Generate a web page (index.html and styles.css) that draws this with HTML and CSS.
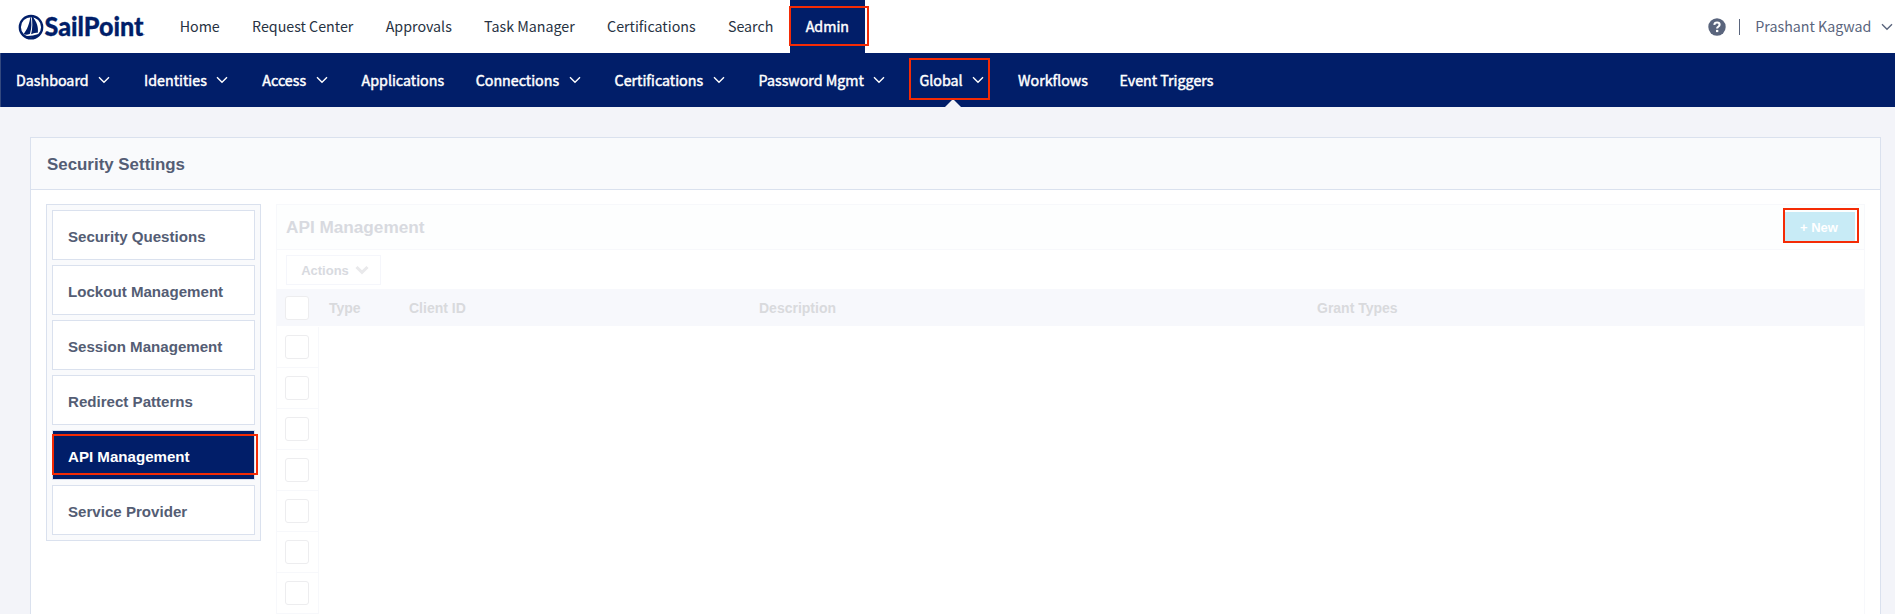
FILE: index.html
```
<!DOCTYPE html>
<html lang="en">
<head>
<meta charset="utf-8">
<title>Security Settings</title>
<link rel="stylesheet" href="styles.css">
</head>
<body>
<header class="topbar">
  <svg class="logo" width="130" height="30" viewBox="0 0 130 30">
    <circle cx="13" cy="15.2" r="11.2" fill="none" stroke="#011e69" stroke-width="2.3"/>
    <path d="M12.4 3.2C12 11 9 18 5.4 22.2Q8.500 23.300 12 21.800Q14.600 13 12.400 3.200Z" fill="#011e69"/>
    <path d="M13.400 3.200C19.500 10 20.500 16 19.800 20.800Q16.500 20.200 13.100 22.200Q15.400 13 13.400 3.200Z" fill="#011e69"/>
    <path d="M5.600 23.600Q12 24.800 20.600 22.100L18 25L9 25.500Z" fill="#011e69"/>
    <text class="logo-text" x="26.500" y="24.200" textLength="99" lengthAdjust="spacingAndGlyphs">SailPoint</text>
    <circle cx="126" cy="22.500" r=".6" fill="#8490b8"/>
  </svg>
  <nav class="primary">
    <a>Home</a><a>Request Center</a><a>Approvals</a><a>Task Manager</a><a>Certifications</a><a>Search</a><a class="current">Admin<i class="mark mark-admin"></i></a>
  </nav>
  <div class="account">
    <svg width="18" height="18" viewBox="0 0 18 18"><circle cx="9" cy="9" r="8.700" fill="#5a657d"/><path d="M6.300 6.900Q6.500 4.500 9.100 4.500Q11.600 4.500 11.600 6.700Q11.600 7.900 10.300 8.600Q9.100 9.200 9.100 10.500" fill="none" stroke="#fff" stroke-width="2.100"/><rect x="8" y="11.900" width="2.300" height="2.200" fill="#fff"/></svg>
    <span class="divider"></span>
    <span class="user">Prashant Kagwad</span>
    <svg class="chev" width="12" height="8" viewBox="0 0 12 8"><path d="M1 1.200L6 6.200L11 1.200"/></svg>
  </div>
</header>
<nav class="secondary">
  <a>Dashboard<svg class="chev" width="12" height="8" viewBox="0 0 12 8"><path d="M1 1.200L6 6.200L11 1.200"/></svg></a>
  <a>Identities<svg class="chev" width="12" height="8" viewBox="0 0 12 8"><path d="M1 1.200L6 6.200L11 1.200"/></svg></a>
  <a>Access<svg class="chev" width="12" height="8" viewBox="0 0 12 8"><path d="M1 1.200L6 6.200L11 1.200"/></svg></a>
  <a>Applications</a>
  <a>Connections<svg class="chev" width="12" height="8" viewBox="0 0 12 8"><path d="M1 1.200L6 6.200L11 1.200"/></svg></a>
  <a>Certifications<svg class="chev" width="12" height="8" viewBox="0 0 12 8"><path d="M1 1.200L6 6.200L11 1.200"/></svg></a>
  <a>Password Mgmt<svg class="chev" width="12" height="8" viewBox="0 0 12 8"><path d="M1 1.200L6 6.200L11 1.200"/></svg></a>
  <a class="open">Global<svg class="chev" width="12" height="8" viewBox="0 0 12 8"><path d="M1 1.200L6 6.200L11 1.200"/></svg><i class="mark mark-global"></i></a>
  <a>Workflows</a>
  <a>Event Triggers</a>
</nav>
<main class="card">
  <h1>Security Settings</h1>
  <div class="content">
    <ul class="side">
      <li>Security Questions</li>
      <li>Lockout Management</li>
      <li>Session Management</li>
      <li>Redirect Patterns</li>
      <li class="selected">API Management<i class="mark mark-api"></i></li>
      <li>Service Provider</li>
    </ul>
    <section class="panel">
      <div class="panel-head"><h2>API Management</h2><button class="new">+ New<i class="mark mark-new"></i></button></div>
      <div class="toolbar"><button class="actions">Actions<svg width="14" height="10" viewBox="0 0 14 10"><path d="M1.500 2L7 7.300L12.500 2" fill="none" stroke="#e9e9eb" stroke-width="3"/></svg></button></div>
      <div class="thead"><span class="box"></span><span>Type</span><span>Client ID</span><span>Description</span><span>Grant Types</span></div>
      <div class="rows">
        <div class="row"><span class="box"></span></div>
        <div class="row"><span class="box"></span></div>
        <div class="row"><span class="box"></span></div>
        <div class="row"><span class="box"></span></div>
        <div class="row"><span class="box"></span></div>
        <div class="row"><span class="box"></span></div>
        <div class="row"><span class="box"></span></div>
      </div>
    </section>
  </div>
</main>
</body>
</html>
```
FILE: styles.css
```
* { box-sizing: border-box; }
body { margin: 0; height: 614px; overflow: hidden; background: #f3f4f9; font-family: "Liberation Sans", Arial, sans-serif; color: #545d74; display: flex; flex-direction: column; }
.topbar, .secondary { font-family: "Noto Sans CJK SC", "Open Sans", sans-serif; font-size: 14.25px; flex: none; display: flex; white-space: nowrap; }
.topbar { height: 53px; background: #fff; align-items: center; color: #273242; }
.logo { margin-left: 18px; flex: none; overflow: visible; }
.logo-text { font: 900 26px Lato, sans-serif; fill: #011e69; stroke: #011e69; stroke-width: .3px; }
.primary { display: flex; margin-left: 15.5px; align-self: stretch; }
.primary a { padding: 0 16.15px 2px; display: flex; align-items: center; position: relative; }
.primary .current { background: #011e69; color: #fff; -webkit-text-stroke: .45px #fff; }
.account { margin-left: auto; display: flex; align-items: center; color: #5a657d; padding-right: 2px; }
.user { padding-bottom: 2px; }
.divider { width: 1px; height: 16px; background: #5a657d; margin: 0 15px 0 13px; }
.chev { margin-left: 9.6px; flex: none; }
.chev path { fill: none; stroke: currentColor; stroke-width: 1.4; }
.secondary { height: 54px; background: #011e69; color: #fff; -webkit-text-stroke: .45px #fff; border-left: 1px solid #34497f; }
.secondary a { display: flex; align-items: center; padding: 0 18.9px 2px 15px; position: relative; }
.secondary .chev { margin-top: 2px; }
.secondary a:not(:has(svg)) { padding-right: 16.6px; }
.open::after { content: ""; position: absolute; bottom: 0; left: 50%; margin-left: -9px; border: 8px solid transparent; border-top: 0; border-bottom-color: #f3f4f9; }
.mark { position: absolute; border: 2px solid #f42b05; z-index: 2; }
.mark-admin { left: -1px; top: 6px; width: 80px; height: 40px; }
.mark-global { left: 5px; top: 5px; width: 81px; height: 42px; }
.mark-api { left: -1px; top: 3px; width: 206px; height: 41px; }
.mark-new { left: -2px; top: -4px; width: 76px; height: 35px; }
.card { margin: 30px 14px 0 30px; flex: 1; background: #fff; border: 1px solid #dae1ee; border-bottom: 0; min-height: 0; display: flex; flex-direction: column; }
h1 { margin: 0; height: 52px; flex: none; padding: 1px 16px 0; line-height: 51px; font-size: 16.9px; background: #f9fafc; border-bottom: 1px solid #dae1ee; }
.content { display: flex; flex: 1; min-height: 0; padding: 14px 15px 0; gap: 15px; }
.side { list-style: none; margin: 0; width: 215px; flex: none; align-self: flex-start; border: 1px solid #dae1ee; background: #f9fafc; padding: 5px; display: grid; gap: 5px; }
.side li { height: 50px; border: 1px solid #dae1ee; background: #fff; padding: 1px 15px 0; line-height: 49px; font-size: 15.1px; font-weight: 700; position: relative; }
.side .selected { background: #011e69; color: #fff; }
.panel { flex: 1; border: 1px solid #f7f8fb; border-bottom: 0; color: #d8dae0; font-weight: 700; }
.panel-head { height: 45px; display: flex; justify-content: space-between; align-items: center; background: #fdfefe; padding: 0 9px; border-bottom: 1px solid #f7f8fb; }
h2 { font-size: 17.2px; margin: 0; }
button { font: 700 13px "Liberation Sans", Arial, sans-serif; border: 0; padding: 0; position: relative; }
.new { width: 70px; height: 29px; background: #c8ebf6; color: #fff; margin-bottom: 1px; padding: 2px 2px 0 0; }
.toolbar { height: 39px; padding: 5px 9px; background: #fff; }
.actions { width: 95px; height: 30px; border: 1px solid #f5f6fb; background: #fff; color: #d8dae0; display: flex; align-items: center; justify-content: center; gap: 6px; padding-left: 3px; }
.thead { height: 37px; background: #f7f8fc; display: grid; grid-template-columns: 52px 80px 350px 558px 1fr; align-items: center; font-size: 14px; color: #d9dadd; }
.box { width: 24px; height: 24px; margin-left: 8px; border: 1px solid #ededef; border-radius: 3px; background: #fff; display: block; }
.rows { padding-top: 1px; }
.row { width: 42px; height: 41px; border-right: 1px solid #f7f8fb; border-bottom: 1px solid #f7f8fb; display: flex; align-items: center; }
```
